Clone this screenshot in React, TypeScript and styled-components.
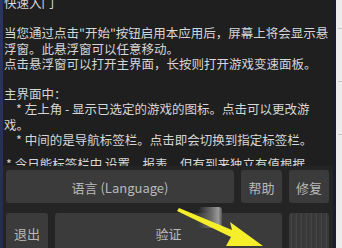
import styled, { createGlobalStyle } from "styled-components"

const Global = createGlobalStyle`
  html, body { margin: 0; padding: 0; background: #1f1f1f; }
  * { box-sizing: border-box; }
`

const Screen = styled.div`
  position: relative;
  width: 342px;
  height: 248px;
  overflow: hidden;
  display: flex;
  font-family: "Noto Sans CJK SC", "Noto Sans", sans-serif;
`

const LeftStrip = styled.div`
  width: 3px;
  background: linear-gradient(#2c3563, #252c52);
`

const Main = styled.div`
  flex: 1;
  display: flex;
  flex-direction: column;
  background: #1f1f1f;
  min-width: 0;
`

const TextArea = styled.div`
  flex: 1;
  overflow: hidden;
  padding-left: 1px;
  color: #d6d6d6;
  font-size: 12.5px;
  line-height: 15.2px;
`

const Lines = styled.div`
  margin-top: -5px;
`

const Line = styled.div<{ $indent?: number; $gap?: number }>`
  white-space: pre;
  height: 15.2px;
  padding-left: ${(p) => p.$indent ?? 0}px;
  margin-top: ${(p) => p.$gap ?? 0}px;
`

const Panel = styled.div`
  height: 82px;
  background: #242424;
  padding: 4px 4px 0 3px;
  display: flex;
  flex-direction: column;
  gap: 10px;
`

const Row = styled.div`
  display: flex;
  gap: 7px;
`

const Button = styled.div<{ $w?: number; $h: number; $textured?: boolean }>`
  ${(p) => (p.$w ? `width: ${p.$w}px;` : "flex: 1;")}
  flex-shrink: 0;
  height: ${(p) => p.$h}px;
  border-radius: 3px;
  background: ${(p) =>
    p.$textured
      ? "repeating-linear-gradient(90deg, #3b3b3b 0 2px, #454545 2px 3px, #383838 3px 5px)"
      : "#3b3b3b"};
  color: #b9b9b9;
  font-size: 13px;
  display: flex;
  align-items: center;
  justify-content: center;
  padding-top: 1px;
`

const RightEdge = styled.div`
  width: 3px;
  background: #1b1d2e;
`

const OtherScreen = styled.div`
  width: 6px;
  background: #ececec;
  display: flex;
  flex-direction: column;
  padding-top: 28px;
  gap: 52px;
`

const OtherLine = styled.div`
  height: 1px;
  margin-left: 2px;
  background: #c8c8c8;
`

const Smudge = styled.div`
  position: absolute;
  left: 198px;
  top: 207px;
  width: 24px;
  height: 21px;
  border-radius: 3px;
  background: linear-gradient(90deg, rgba(90, 90, 90, 0) 0%, #6a6a6a 55%, #9a9a9a 85%, #555 100%);
`

const Annotation = styled.svg`
  position: absolute;
  left: 0;
  top: 0;
  pointer-events: none;
`

const Arrow = () => (
  <Annotation width="342" height="248" viewBox="0 0 342 248">
    <polygon
      points="177,211 179,208 232,230 230,222 263,246 226,246 231,237"
      fill="#f5ee2a"
    />
  </Annotation>
)

export default function App() {
  return (
    <>
      <Global />
      <Screen>
        <LeftStrip />
        <Main>
          <TextArea>
            <Lines>
              <Line>快速入门</Line>
              <Line />
              <Line>当您通过点击"开始"按钮启用本应用后，屏幕上将会显示悬</Line>
              <Line>浮窗。此悬浮窗可以任意移动。</Line>
              <Line>点击悬浮窗可以打开主界面，长按则打开游戏变速面板。</Line>
              <Line />
              <Line>主界面中：</Line>
              <Line $indent={12}>* 左上角 - 显示已选定的游戏的图标。点击可以更改游</Line>
              <Line>戏。</Line>
              <Line $indent={12}>* 中间的是导航标签栏。点击即会切换到指定标签栏。</Line>
              <Line $indent={2} $gap={9}>* 今日能标签栏中 设置、报表，但有到来独立有值根据</Line>
            </Lines>
          </TextArea>
          <Panel>
            <Row>
              <Button $h={33}>语言 (Language)</Button>
              <Button $w={41} $h={33}>帮助</Button>
              <Button $w={40} $h={33}>修复</Button>
            </Row>
            <Row>
              <Button $w={42} $h={40}>退出</Button>
              <Button $h={40}>验证</Button>
              <Button $w={40} $h={40} $textured />
            </Row>
          </Panel>
        </Main>
        <RightEdge />
        <OtherScreen>
          <OtherLine />
          <OtherLine />
          <OtherLine />
        </OtherScreen>
        <Smudge />
        <Arrow />
      </Screen>
    </>
  )
}
